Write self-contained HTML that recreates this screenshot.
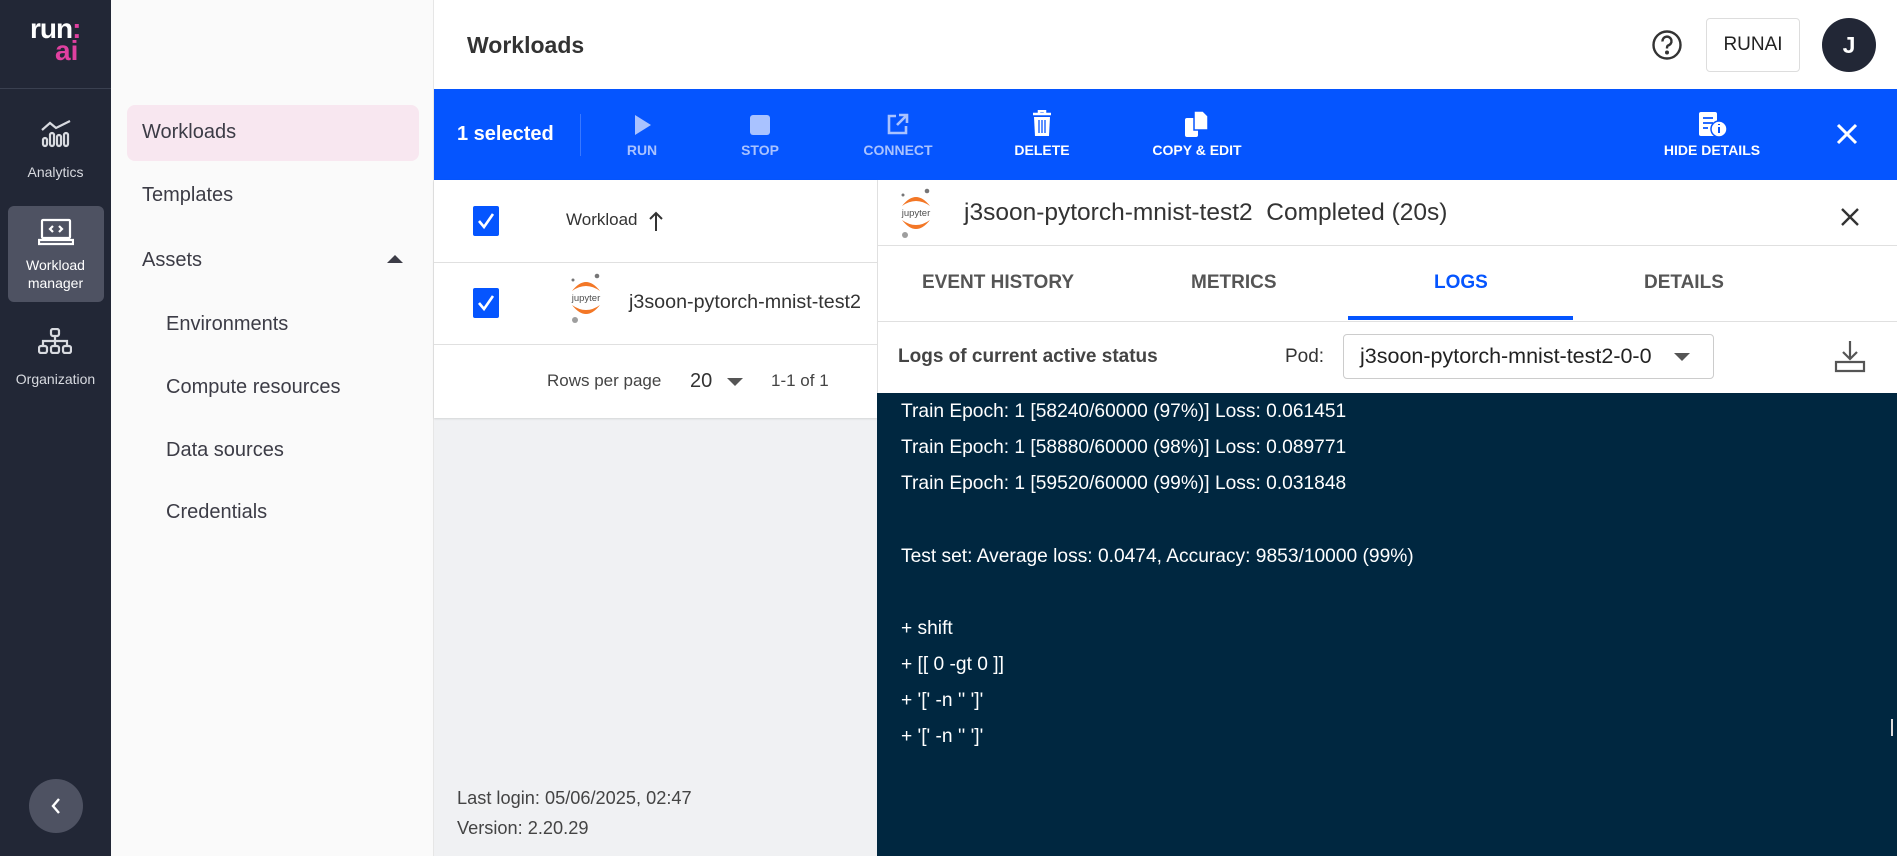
<!DOCTYPE html>
<html><head><meta charset="utf-8"><style>
*{box-sizing:border-box;margin:0;padding:0}
body{width:1897px;height:856px;overflow:hidden;font-family:"Liberation Sans",sans-serif;background:#fff;position:relative;color:#333}
.a{position:absolute}
.rail{left:0;top:0;width:111px;height:856px;background:#222736}
.rl{color:#d8dae0;font-size:14px;text-align:center;width:111px;left:0}
.nav{left:111px;top:0;width:323px;height:856px;background:#fafafa;border-right:1px solid #e6e6e6}
.ni{font-size:20px;color:#3c3c46}
.tb{color:#fff;font-size:14px;font-weight:bold;text-align:center;width:140px}
.dis{color:#a9c2ff}
.log{color:#fff;font-size:19.2px;left:901px}
</style></head><body>
<div class="a rail">
 <div class="a" style="left:30px;top:16px;color:#fff;font-size:28px;font-weight:bold;letter-spacing:-1px;line-height:26px">run<span style="color:#e040a0">:</span></div>
 <div class="a" style="left:55px;top:38px;color:#e040a0;font-size:28px;font-weight:bold;line-height:26px">ai</div>
 <div class="a" style="left:0;top:88px;width:111px;height:1px;background:#3a4050"></div>
 <svg class="a" style="left:40px;top:120px" width="32" height="28" viewBox="0 0 32 28" fill="none" stroke="#d8dae0" stroke-width="2.2"><path d="M2 10 L10 3 L16 8 L30 1"/><rect x="3" y="18" width="4" height="8" rx="2"/><rect x="10" y="13" width="4" height="13" rx="2"/><rect x="17" y="15" width="4" height="11" rx="2"/><rect x="24" y="13" width="4" height="13" rx="2"/></svg>
 <div class="a rl" style="top:164px">Analytics</div>
 <div class="a" style="left:8px;top:206px;width:96px;height:96px;background:#4e5262;border-radius:6px"></div>
 <svg class="a" style="left:38px;top:218px" width="36" height="28" viewBox="0 0 36 28" fill="none" stroke="#fff" stroke-width="2.2"><rect x="4" y="2" width="28" height="18" rx="1"/><path d="M1 22 H35 V26 H1 Z"/><path d="M15 8 L12 11 L15 14 M21 8 L24 11 L21 14"/></svg>
 <div class="a rl" style="top:256px;color:#fff;line-height:18px">Workload<br>manager</div>
 <svg class="a" style="left:38px;top:328px" width="34" height="26" viewBox="0 0 34 26" fill="none" stroke="#d8dae0" stroke-width="2.2"><rect x="13" y="1" width="8" height="7" rx="2"/><path d="M17 8 V13 M5 18 V13 H29 V18 M17 13 V18"/><rect x="1" y="18" width="8" height="7" rx="2"/><rect x="13" y="18" width="8" height="7" rx="2"/><rect x="25" y="18" width="8" height="7" rx="2"/></svg>
 <div class="a rl" style="top:371px">Organization</div>
 <div class="a" style="left:29px;top:779px;width:54px;height:54px;border-radius:50%;background:#4e5262"></div>
 <svg class="a" style="left:48px;top:796px" width="16" height="20" viewBox="0 0 16 20" fill="none" stroke="#fff" stroke-width="2.4"><path d="M11 3 L5 10 L11 17"/></svg>
</div>
<div class="a nav">
 <div class="a" style="left:16px;top:105px;width:292px;height:56px;background:#f8e7f0;border-radius:8px"></div>
 <div class="a ni" style="left:31px;top:121px">Workloads</div>
 <div class="a ni" style="left:31px;top:184px">Templates</div>
 <div class="a ni" style="left:31px;top:249px">Assets</div>
 <div class="a" style="left:276px;top:255px;width:0;height:0;border-left:8px solid transparent;border-right:8px solid transparent;border-bottom:8px solid #3c3c46"></div>
 <div class="a ni" style="left:55px;top:313px">Environments</div>
 <div class="a ni" style="left:55px;top:376px">Compute resources</div>
 <div class="a ni" style="left:55px;top:439px">Data sources</div>
 <div class="a ni" style="left:55px;top:501px">Credentials</div>
</div>
<div class="a" style="left:467px;top:32px;font-size:23px;font-weight:bold;color:#333">Workloads</div>
<svg class="a" style="left:1651px;top:29px" width="32" height="32" viewBox="0 0 32 32" fill="none" stroke="#333" stroke-width="2.4"><circle cx="16" cy="16" r="13.5"/><path d="M11.5 12.5 A4.5 4.5 0 1 1 17 16.5 C16 17 16 18 16 19.5"/><circle cx="16" cy="23.5" r="0.8" fill="#333"/></svg>
<div class="a" style="left:1706px;top:18px;width:94px;height:54px;border:1px solid #ddd;border-radius:4px;font-size:19px;color:#222;text-align:center;line-height:52px">RUNAI</div>
<div class="a" style="left:1822px;top:18px;width:54px;height:54px;border-radius:50%;background:#222736;color:#fff;font-size:23px;font-weight:bold;text-align:center;line-height:54px">J</div>
<div class="a" style="left:434px;top:89px;width:1463px;height:91px;background:#0555ff"></div>
<div class="a" style="left:457px;top:123px;color:#fff;font-size:20px;font-weight:bold">1 selected</div>
<div class="a" style="left:580px;top:114px;width:1px;height:42px;background:#3a78ff"></div>
<svg class="a" style="left:632px;top:113px" width="22" height="24"><path d="M3 2 L19 12 L3 22 Z" fill="#a9c2ff"/></svg>
<div class="a tb dis" style="left:572px;top:142px">RUN</div>
<svg class="a" style="left:750px;top:115px" width="20" height="20"><rect x="0" y="0" width="20" height="20" rx="3" fill="#a9c2ff"/></svg>
<div class="a tb dis" style="left:690px;top:142px">STOP</div>
<svg class="a" style="left:886px;top:112px" width="24" height="24" fill="none" stroke="#a9c2ff" stroke-width="2.6"><path d="M10 4 H3 V21 H20 V14"/><path d="M13 3 H21 V11 M21 3 L11 13"/></svg>
<div class="a tb dis" style="left:828px;top:142px">CONNECT</div>
<svg class="a" style="left:1031px;top:110px" width="22" height="27"><path d="M2 4 H20 M8 4 V1 H14 V4" stroke="#fff" stroke-width="2.5" fill="none"/><path d="M3 7 H19 L18 26 H4 Z" fill="#fff"/><path d="M8 10 V23 M11 10 V23 M14 10 V23" stroke="#0555ff" stroke-width="1.3"/></svg>
<div class="a tb" style="left:972px;top:142px">DELETE</div>
<svg class="a" style="left:1184px;top:110px" width="26" height="28"><rect x="1" y="8" width="13" height="19" rx="2" fill="#fff"/><path d="M10 1 H19 L24 6 V20 H10 Z" fill="#fff" stroke="#0555ff" stroke-width="1.5"/></svg>
<div class="a tb" style="left:1127px;top:142px">COPY &amp; EDIT</div>
<svg class="a" style="left:1698px;top:111px" width="30" height="28"><rect x="1" y="1" width="18" height="24" rx="2" fill="#fff"/><path d="M5 7 H15 M5 12 H15 M5 17 H10" stroke="#0555ff" stroke-width="1.8"/><circle cx="21" cy="18" r="8" fill="#fff" stroke="#0555ff" stroke-width="1.5"/><path d="M21 16 V22 M21 13 V14" stroke="#0555ff" stroke-width="2"/></svg>
<div class="a tb" style="left:1642px;top:142px">HIDE DETAILS</div>
<svg class="a" style="left:1836px;top:123px" width="22" height="22" stroke="#fff" stroke-width="3"><path d="M2 2 L20 20 M20 2 L2 20"/></svg>
<div class="a" style="left:434px;top:180px;width:443px;height:676px;background:#f0f1f3"></div>
<div class="a" style="left:434px;top:180px;width:443px;height:238px;background:#fff;box-shadow:0 1px 2px rgba(0,0,0,.12)"></div>
<div class="a" style="left:434px;top:262px;width:443px;height:1px;background:#e0e0e0"></div>
<div class="a" style="left:434px;top:344px;width:443px;height:1px;background:#e0e0e0"></div>
<svg class="a" style="left:473px;top:206px" width="26" height="30"><rect width="26" height="30" rx="2" fill="#0555ff"/><path d="M6 15 L11 21 L20 8" stroke="#fff" stroke-width="2.6" fill="none"/></svg>
<div class="a" style="left:566px;top:210px;font-size:17px;color:#333">Workload</div>
<svg class="a" style="left:648px;top:210px" width="16" height="22" stroke="#333" stroke-width="2" fill="none"><path d="M8 21 V3 M2 9 L8 3 L14 9"/></svg>
<svg class="a" style="left:473px;top:288px" width="26" height="30"><rect width="26" height="30" rx="2" fill="#0555ff"/><path d="M6 15 L11 21 L20 8" stroke="#fff" stroke-width="2.6" fill="none"/></svg>
<svg class="a" style="left:568px;top:273px" width="36" height="52" viewBox="0 0 36 52"><path d="M4 18 Q18 0 32 18 Q18 8 4 18Z" fill="#f37726"/><path d="M4 32 Q18 50 32 32 Q18 42 4 32Z" fill="#f37726"/><circle cx="29" cy="3" r="2.3" fill="#767677"/><circle cx="5" cy="7" r="1.5" fill="#767677"/><circle cx="7" cy="47" r="3" fill="#9e9e9e"/><text x="18" y="28" font-size="9.5" text-anchor="middle" fill="#4e4e4e" font-family="Liberation Sans">jupyter</text></svg>
<div class="a" style="left:629px;top:291px;font-size:19.7px;color:#333">j3soon-pytorch-mnist-test2</div>
<div class="a" style="left:547px;top:371px;font-size:17px;color:#444">Rows per page</div>
<div class="a" style="left:690px;top:370px;font-size:20px;color:#333">20</div>
<div class="a" style="left:727px;top:378px;border-left:8px solid transparent;border-right:8px solid transparent;border-top:8px solid #555"></div>
<div class="a" style="left:771px;top:371px;font-size:17px;color:#444">1-1 of 1</div>
<div class="a" style="left:457px;top:783px;font-size:18.2px;color:#444;line-height:30px">Last login: 05/06/2025, 02:47<br>Version: 2.20.29</div>
<div class="a" style="left:877px;top:180px;width:1020px;height:213px;background:#fff;border-left:1px solid #e0e0e0"></div>
<div class="a" style="left:877px;top:245px;width:1020px;height:1px;background:#e0e0e0"></div>
<div class="a" style="left:877px;top:321px;width:1020px;height:1px;background:#e0e0e0"></div>
<svg class="a" style="left:898px;top:188px" width="36" height="52" viewBox="0 0 36 52"><path d="M4 18 Q18 0 32 18 Q18 8 4 18Z" fill="#f37726"/><path d="M4 32 Q18 50 32 32 Q18 42 4 32Z" fill="#f37726"/><circle cx="29" cy="3" r="2.3" fill="#767677"/><circle cx="5" cy="7" r="1.5" fill="#767677"/><circle cx="7" cy="47" r="3" fill="#9e9e9e"/><text x="18" y="28" font-size="9.5" text-anchor="middle" fill="#4e4e4e" font-family="Liberation Sans">jupyter</text></svg>
<div class="a" style="left:964px;top:199px;font-size:24.5px;color:#333">j3soon-pytorch-mnist-test2&nbsp;&nbsp;Completed (20s)</div>
<svg class="a" style="left:1840px;top:207px" width="20" height="20" stroke="#333" stroke-width="2.4"><path d="M2 2 L18 18 M18 2 L2 18"/></svg>
<div class="a" style="left:922px;top:272px;font-size:19px;font-weight:bold;color:#555">EVENT HISTORY</div>
<div class="a" style="left:1191px;top:272px;font-size:19px;font-weight:bold;color:#555">METRICS</div>
<div class="a" style="left:1434px;top:272px;font-size:19px;font-weight:bold;color:#0555ff">LOGS</div>
<div class="a" style="left:1644px;top:272px;font-size:19px;font-weight:bold;color:#555">DETAILS</div>
<div class="a" style="left:1348px;top:316px;width:225px;height:4px;background:#0555ff"></div>
<div class="a" style="left:898px;top:346px;font-size:19px;font-weight:bold;color:#444">Logs of current active status</div>
<div class="a" style="left:1285px;top:346px;font-size:19px;color:#333">Pod:</div>
<div class="a" style="left:1343px;top:334px;width:371px;height:45px;border:1px solid #ccc;border-radius:4px"></div>
<div class="a" style="left:1360px;top:344px;font-size:21.5px;color:#222">j3soon-pytorch-mnist-test2-0-0</div>
<div class="a" style="left:1674px;top:353px;border-left:8px solid transparent;border-right:8px solid transparent;border-top:8px solid #555"></div>
<svg class="a" style="left:1834px;top:340px" width="32" height="34" fill="none" stroke="#555" stroke-width="2.2"><path d="M16 1 V19 M9 12 L16 19 L23 12"/><path d="M2 22 H30 V31 H2 Z"/></svg>
<div class="a" style="left:877px;top:393px;width:1020px;height:463px;background:#002740"></div>
<div class="a log" style="top:401px">Train Epoch: 1 [58240/60000 (97%)] Loss: 0.061451</div>
<div class="a log" style="top:437px">Train Epoch: 1 [58880/60000 (98%)] Loss: 0.089771</div>
<div class="a log" style="top:473px">Train Epoch: 1 [59520/60000 (99%)] Loss: 0.031848</div>
<div class="a log" style="top:546px">Test set: Average loss: 0.0474, Accuracy: 9853/10000 (99%)</div>
<div class="a log" style="top:618px">+ shift</div>
<div class="a log" style="top:654px">+ [[ 0 -gt 0 ]]</div>
<div class="a log" style="top:690px">+ '[' -n '' ']'</div>
<div class="a log" style="top:726px">+ '[' -n '' ']'</div>
<div class="a" style="left:1891px;top:719px;width:2px;height:17px;background:#ddd"></div>
</body></html>
